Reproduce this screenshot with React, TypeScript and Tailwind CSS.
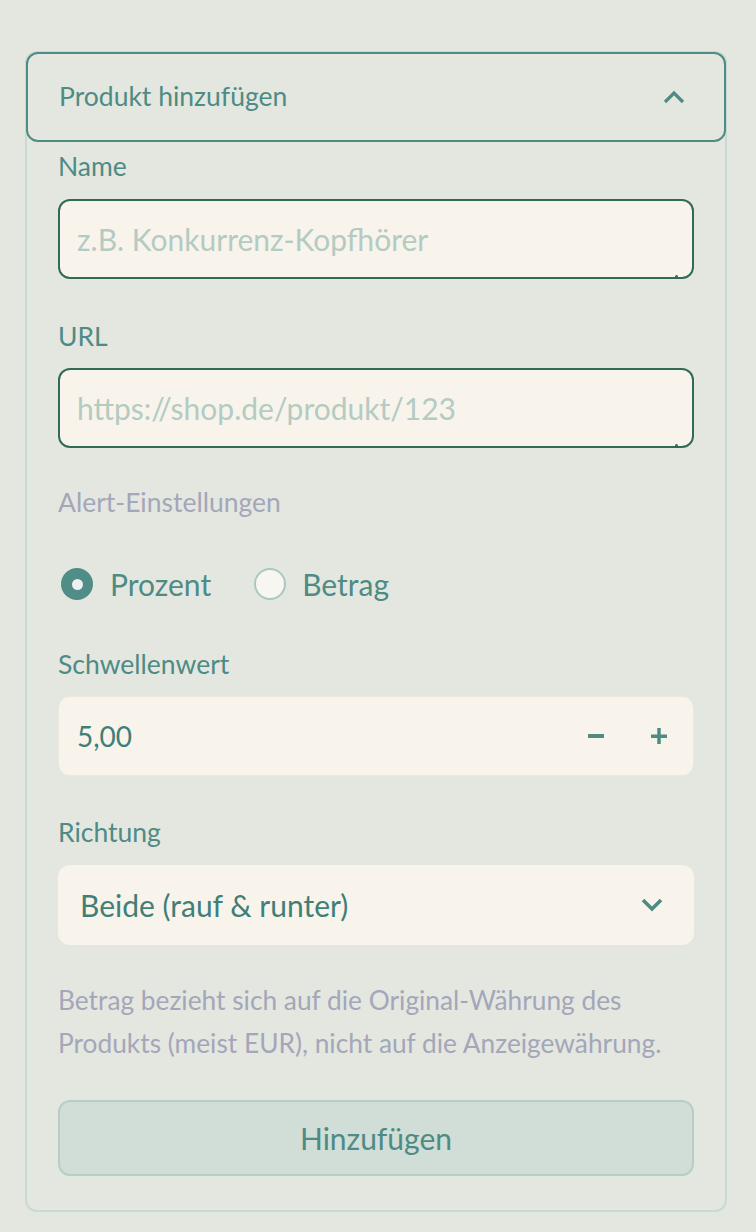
import { useState } from "react";

const TEAL = "text-[#4e8b84]";

function ChevronUp() {
  return (
    <svg width="22" height="14" viewBox="0 0 22 14" fill="none">
      <path d="M2 12 L11 3 L20 12" stroke="#4e8b84" strokeWidth="3.2" strokeLinecap="butt" strokeLinejoin="miter" />
    </svg>
  );
}

function ChevronDown() {
  return (
    <svg width="22" height="14" viewBox="0 0 22 14" fill="none">
      <path d="M2 2 L11 11 L20 2" stroke="#4e8b84" strokeWidth="3.6" strokeLinecap="butt" strokeLinejoin="miter" />
    </svg>
  );
}

const Label = ({ children }: { children: React.ReactNode }) => (
  <div className={`text-[26.5px] leading-[30px] ${TEAL}`}>{children}</div>
);

const Radio = ({ checked }: { checked: boolean }) =>
  checked ? (
    <span className="w-[32px] h-[32px] rounded-full bg-[#4f8d86] flex items-center justify-center">
      <span className="w-[11px] h-[11px] rounded-full bg-[#eef0f3]" />
    </span>
  ) : (
    <span className="w-[32px] h-[32px] rounded-full bg-[#f8f6f1] border-2 border-[#a9c8c0]" />
  );

const App = () => {
  const [mode, setMode] = useState<"prozent" | "betrag">("prozent");

  return (
    <div
      className="min-h-[1232px] bg-[#e3e7e0] pt-[51px] px-[25px]"
      style={{ fontFamily: "Lato, 'Noto Sans', sans-serif" }}
    >
      <div className="w-[702px] border-2 border-[#c9d9d1] rounded-[12px]">
        {/* Expander header */}
        <div className="-m-px h-[90px] border-2 border-[#4f8c85] rounded-[12px] flex items-center justify-between pl-[31px] pr-[39px]">
          <span className={`text-[26.5px] ${TEAL}`}>Produkt hinzufügen</span>
          <ChevronUp />
        </div>

        <div className="px-[31px] pt-[10px] pb-[34px]">
          <Label>Name</Label>
          <div className="relative mt-[18px] h-[80px] bg-[#f8f4ec] border-2 border-[#2f6b55] rounded-[12px] flex items-center pl-[17px]">
            <span className="text-[30px] text-[#b3cbc2]">z.B. Konkurrenz-Kopfhörer</span>
            <span className="absolute right-[14px] bottom-[-1px] w-[3px] h-[3px] rounded-full bg-[#2f6b55]" />
          </div>

          <div className="mt-[42px]">
            <Label>URL</Label>
          </div>
          <div className="relative mt-[17px] h-[80px] bg-[#f8f4ec] border-2 border-[#2f6b55] rounded-[12px] flex items-center pl-[17px]">
            <span className="text-[30px] text-[#b3cbc2]">https://shop.de/produkt/123</span>
            <span className="absolute right-[14px] bottom-[-1px] w-[3px] h-[3px] rounded-full bg-[#2f6b55]" />
          </div>

          <div className="mt-[39px] text-[26.5px] leading-[30px] text-[#a4a6b9]">Alert-Einstellungen</div>

          {/* Radio group */}
          <div className="mt-[51px] h-[32px] flex items-center gap-[43px] pl-[3px]">
            <button className="flex items-center gap-[17px]" onClick={() => setMode("prozent")}>
              <Radio checked={mode === "prozent"} />
              <span className={`text-[30px] leading-[32px] ${TEAL}`}>Prozent</span>
            </button>
            <button className="flex items-center gap-[16px]" onClick={() => setMode("betrag")}>
              <Radio checked={mode === "betrag"} />
              <span className={`text-[30px] leading-[32px] ${TEAL}`}>Betrag</span>
            </button>
          </div>

          <div className="mt-[49px]">
            <Label>Schwellenwert</Label>
          </div>
          <div className="mt-[17px] h-[80px] bg-[#f8f4ec] border border-[#ece8df] rounded-[12px] flex items-center pl-[18px] pr-[26px]">
            <span className="flex-1 text-[28px] text-[#3f7f78]">5,00</span>
            <svg width="16" height="4" viewBox="0 0 16 4" className="mr-[47px]">
              <rect width="16" height="4" fill="#4e8b84" />
            </svg>
            <svg width="16" height="16" viewBox="0 0 16 16">
              <rect x="0" y="6.5" width="16" height="3.5" fill="#4e8b84" />
              <rect x="6.25" y="0" width="3.5" height="16" fill="#4e8b84" />
            </svg>
          </div>

          <div className="mt-[41px]">
            <Label>Richtung</Label>
          </div>
          <div className="mt-[18px] h-[80px] bg-[#f8f4ec] rounded-[12px] flex items-center justify-between pl-[22px] pr-[31px]">
            <span className="text-[30px] text-[#3f7f78]">Beide (rauf &amp; runter)</span>
            <ChevronDown />
          </div>

          <p className="mt-[34px] text-[26.3px] leading-[43px] text-[#a4a6b9] whitespace-nowrap">
            Betrag bezieht sich auf die Original-Währung des
            <br />
            Produkts (meist EUR), nicht auf die Anzeigewährung.
          </p>

          <button className="mt-[35px] w-full h-[76px] bg-[#d1ddd7] border-2 border-[#b5cfc6] rounded-[12px] flex items-center justify-center">
            <span className={`text-[30px] ${TEAL}`}>Hinzufügen</span>
          </button>
        </div>
      </div>
    </div>
  );
};

export default App;
